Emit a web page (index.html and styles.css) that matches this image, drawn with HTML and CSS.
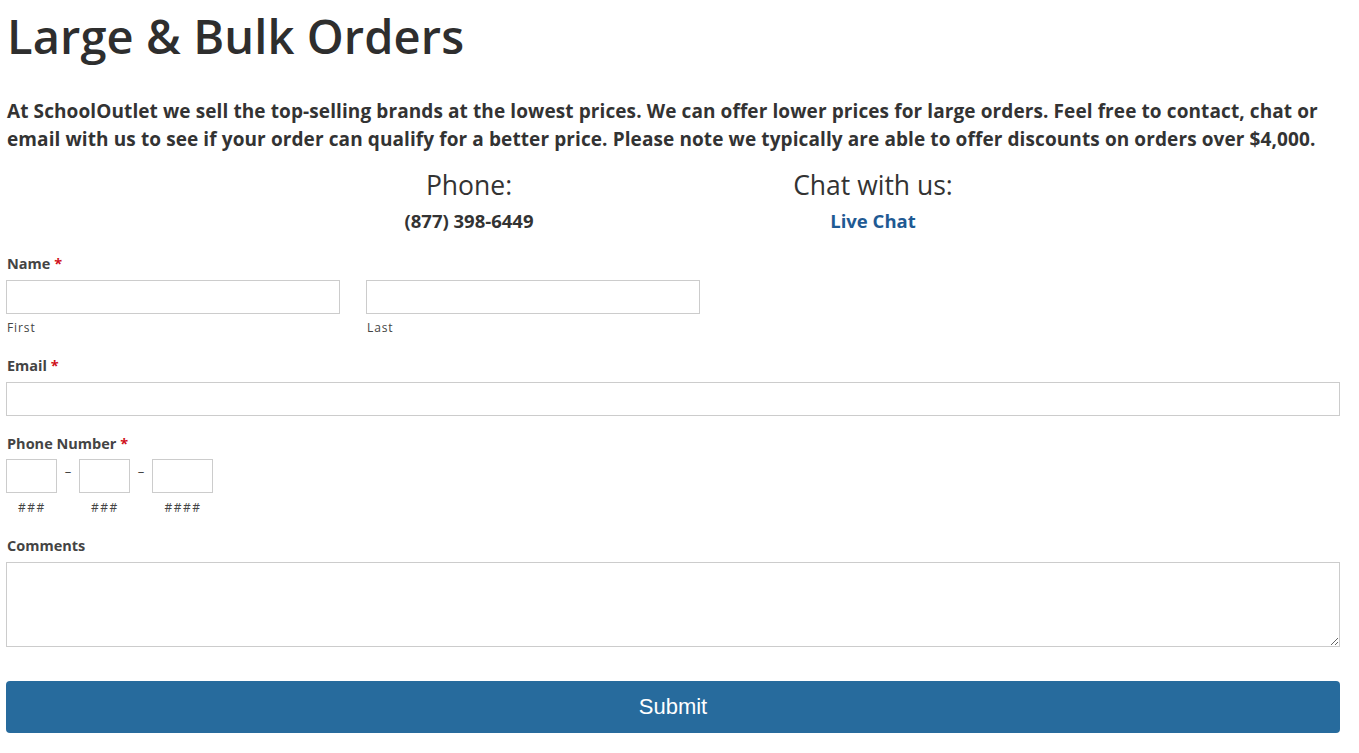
FILE: index.html
```html
<!DOCTYPE html>
<html>
<head>
<meta charset="utf-8">
<link rel="stylesheet" href="styles.css">
</head>
<body>
<div class="page">
  <h1 class="title">Large &amp; Bulk Orders</h1>
  <p class="intro">At SchoolOutlet we sell the top-selling brands at the lowest prices. We can offer lower prices for large orders. Feel free to contact, chat or email with us to see if your order can qualify for a better price. Please note we typically are able to offer discounts on orders over $4,000.</p>
  <div class="contact">
    <div class="contact-col">
      <div class="contact-head">Phone:</div>
      <div class="contact-val">(877) 398-6449</div>
    </div>
    <div class="contact-col">
      <div class="contact-head">Chat with us:</div>
      <a class="contact-val link" href="#">Live Chat</a>
    </div>
  </div>
  <form class="form">
    <div class="field field-name">
      <label class="label">Name <span class="req">*</span></label>
      <div class="name-row">
        <div class="name-part">
          <input class="input" type="text">
          <div class="sub">First</div>
        </div>
        <div class="name-part">
          <input class="input" type="text">
          <div class="sub">Last</div>
        </div>
      </div>
    </div>
    <div class="field">
      <label class="label">Email <span class="req">*</span></label>
      <input class="input full" type="text">
    </div>
    <div class="field field-phone">
      <label class="label label-tight">Phone Number <span class="req">*</span></label>
      <div class="phone-row">
        <div class="phone-part p3">
          <input class="input" type="text">
          <div class="sub center">###</div>
        </div>
        <span class="dash">–</span>
        <div class="phone-part p3">
          <input class="input" type="text">
          <div class="sub center">###</div>
        </div>
        <span class="dash">–</span>
        <div class="phone-part p4">
          <input class="input" type="text">
          <div class="sub center">####</div>
        </div>
      </div>
    </div>
    <div class="field">
      <label class="label">Comments</label>
      <textarea class="textarea"></textarea>
    </div>
    <button class="submit" type="button">Submit</button>
  </form>
</div>
</body>
</html>
```
FILE: styles.css
```css
* { box-sizing: border-box; }
html, body { margin: 0; padding: 0; background: #fff; }
body { font-family: "Open Sans", "Liberation Sans", sans-serif; color: #333; }
.page { padding: 0 19px 0 6px; }
.title {
  font-family: "Open Sans", sans-serif;
  font-weight: 600;
  font-size: 47px;
  line-height: 56px;
  margin: 8px 0 0 1px;
  color: #2e2e2e;
  letter-spacing: 0.1px;
}
.intro {
  font-size: 19px;
  font-weight: 700;
  line-height: 28px;
  margin: 33px 0 0 1px;
  color: #333;
  letter-spacing: 0.1px;
}
.contact {
  display: flex;
  justify-content: center;
  margin-top: 14px;
  padding-right: 4px;
}
.contact-col {
  width: 404px;
  display: flex;
  flex-direction: column;
  align-items: center;
}
.contact-head { font-size: 26.5px; font-weight: 400; line-height: 36px; color: #333; }
.contact-val { font-size: 18.5px; font-weight: 700; line-height: 30px; color: #333; margin-top: 3px; }
.link { color: #1f5a93; text-decoration: none; }
.form { margin-top: 18px; }
.field { margin-bottom: 18px; }
.field-name { margin-bottom: 20px; }
.field-phone { margin-bottom: 20px; }
.label { display: block; font-size: 14.5px; font-weight: 700; color: #444; line-height: 20px; margin: 0 0 6px 1px; }
.label-tight { margin-bottom: 5px; }
.req { color: #d0121b; }
.input {
  display: block;
  height: 34px;
  border: 1px solid #ccc;
  background: #fff;
  padding: 4px 8px;
  font: inherit;
  border-radius: 0;
  width: 100%;
}
.name-row { display: flex; gap: 26px; }
.name-part { width: 334px; }
.sub { font-size: 12px; color: #444; letter-spacing: 0.9px; line-height: 16px; margin-top: 6px; padding-left: 1px; }
.sub.center { text-align: center; letter-spacing: 1.5px; margin-top: 7px; }
.phone-row { display: flex; align-items: flex-start; }
.p3 { width: 51px; }
.p4 { width: 61px; }
.dash { width: 22px; text-align: center; line-height: 24px; font-size: 13px; color: #444; }
.textarea {
  display: block;
  width: 100%;
  height: 85px;
  border: 1px solid #ccc;
  resize: vertical;
  font: inherit;
}
.submit {
  display: block;
  width: 100%;
  height: 52px;
  margin-top: 34px;
  background: #276b9d;
  color: #fff;
  border: none;
  border-radius: 4px;
  font-family: "Liberation Sans", Arial, sans-serif;
  font-size: 22px;
}
```
